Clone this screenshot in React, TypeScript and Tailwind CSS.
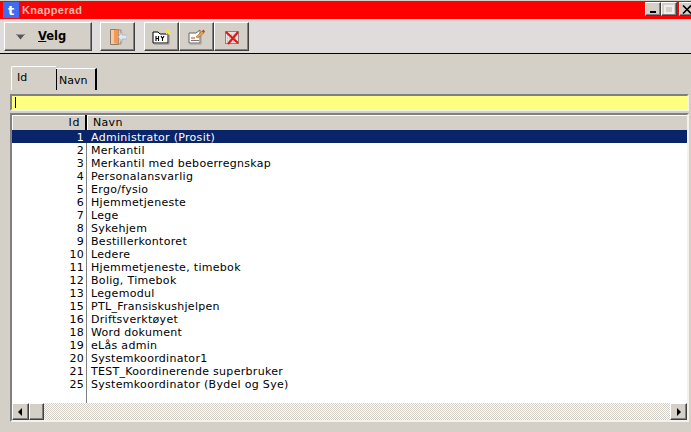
const rows: [number, string][] = [
  [1, 'Administrator (Prosit)'],
  [2, 'Merkantil'],
  [3, 'Merkantil med beboerregnskap'],
  [4, 'Personalansvarlig'],
  [5, 'Ergo/fysio'],
  [6, 'Hjemmetjeneste'],
  [7, 'Lege'],
  [8, 'Sykehjem'],
  [9, 'Bestillerkontoret'],
  [10, 'Ledere'],
  [11, 'Hjemmetjeneste, timebok'],
  [12, 'Bolig, Timebok'],
  [13, 'Legemodul'],
  [15, 'PTL_Fransiskushjelpen'],
  [16, 'Driftsverktøyet'],
  [18, 'Word dokument'],
  [19, 'eLås admin'],
  [20, 'Systemkoordinator1'],
  [21, 'TEST_Koordinerende superbruker'],
  [25, 'Systemkoordinator (Bydel og Sye)'],
]

const raised =
  'border border-t-white border-l-white border-r-[#404040] border-b-[#404040] bg-[#d4d0c8] shadow-[inset_-1px_-1px_0_#808080]'

function WinButton({ children }: { children: React.ReactNode }) {
  return <div className={`${raised} w-[16px] h-[14px] flex items-center justify-center`}>{children}</div>
}

function ToolButton({ children }: { children: React.ReactNode }) {
  return <div className={`${raised} w-[35px] h-[29px] flex items-center justify-center`}>{children}</div>
}

export default function App() {
  return (
    <div className="w-[691px] h-[432px] overflow-hidden bg-[#d4d0c8] flex flex-col font-['DejaVu_Sans',sans-serif] text-[11px] leading-[13px] text-black">
      {/* Title bar */}
      <div className="h-[18px] mt-px bg-[#ff0000] flex items-center shrink-0">
        <div className="w-[16px] h-[16px] ml-[3px] bg-[#3f6cf0] text-white font-bold text-[13px] flex items-center justify-center">t</div>
        <span className="ml-[3px] text-[#f5b8b0] font-bold font-['Liberation_Sans',sans-serif] text-[11px] tracking-[0.3px]">Knapperad</span>
        <div className="ml-auto flex mr-[-4px] -mt-[2px]">
          <WinButton>
            <div className="w-[6px] h-[2px] bg-black mt-[6px]" />
          </WinButton>
          <WinButton>
            <div className="w-[10px] h-[9px] border-2 border-[#f0eeea] bg-[#d4d0c8]" />
          </WinButton>
          <div className="ml-[2px]">
            <WinButton>
              <svg width="10" height="9" viewBox="0 0 10 9">
                <path d="M1 0.5L9 8.5M9 0.5L1 8.5" stroke="#000" strokeWidth="1.6" />
              </svg>
            </WinButton>
          </div>
        </div>
      </div>

      {/* Toolbar */}
      <div className="h-[35px] bg-[#e0dcdc] border-b border-black flex items-start pt-[3px] pl-[4px] shrink-0">
        <div className={`${raised} w-[88px] h-[29px] flex items-center`}>
          <svg width="9" height="6" viewBox="0 0 9 6" className="ml-[11px]">
            <path d="M0 0H9L4.5 5.5Z" fill="#555" />
            <path d="M1 0.5H8" stroke="#999" />
          </svg>
          <span className="ml-[13px] font-bold text-[11.5px]">
            <span className="underline">V</span>elg
          </span>
        </div>
        <div className="ml-[8px]">
          <ToolButton>
            <svg width="18" height="18" viewBox="0 0 18 18">
              <path d="M1.5 1.5H9.5V16.5H1.5Z" fill="#f7c9a0" stroke="#8a7d70" />
              <path d="M5 2L9.5 1.5V16.5L5 15Z" fill="#f09a55" />
              <path d="M10 2H12V5M12 13V16H10" fill="none" stroke="#8a8a8a" />
              <path d="M9 9L13 4.5V7H18V11H13V13.5Z" fill="#dce8f2" stroke="#9aa8b4" strokeWidth="0.6" />
            </svg>
          </ToolButton>
        </div>
        <div className="ml-[9px] flex">
          <ToolButton>
            <svg width="20" height="16" viewBox="0 0 20 16">
              <path d="M1 3H6L8 5H16V14H1Z" fill="#fff" stroke="#000" />
              <path d="M2 15H17V6" fill="none" stroke="#888" />
              <path d="M4 7V12M4 9.5H6.5M6.5 7V12M9 7L10.5 9.5L12 7M10.5 9.5V12" fill="none" stroke="#000" strokeWidth="1.1" />
              <path d="M16 0V6M13 3H19M14 1L18 5M18 1L14 5" stroke="#f2e63c" strokeWidth="1" />
            </svg>
          </ToolButton>
          <ToolButton>
            <svg width="18" height="17" viewBox="0 0 18 17">
              <path d="M1 5L8 5L12 2V15H1Z" fill="#fffdf4" stroke="#666" />
              <path d="M2 16H13V8" fill="none" stroke="#999" />
              <path d="M3 10H7" stroke="#d8352a" />
              <path d="M3 12.5H11" stroke="#777" />
              <path d="M8 9L14 3L16 5L10 10Z" fill="#e8a24a" stroke="#8a5a2a" strokeWidth="0.5" />
              <path d="M14 3L15.5 1.5L17 3.5L16 5Z" fill="#d8352a" />
            </svg>
          </ToolButton>
          <ToolButton>
            <svg width="16" height="16" viewBox="0 0 16 16">
              <path d="M1.5 2.5H14.5V14.5H1.5Z" fill="#e8e4dc" stroke="#333" strokeDasharray="1 1" />
              <path d="M3 6H13M3 9H13M3 12H13" stroke="#aaa" strokeDasharray="1 1" />
              <path d="M2 3L14 14M14 3L4 15" stroke="#e01818" strokeWidth="2.2" />
            </svg>
          </ToolButton>
        </div>
      </div>

      {/* Tabs */}
      <div className="flex items-end pl-[11px] mt-[11px] h-[25px] shrink-0">
        <div className="w-[45px] h-[24px] bg-[#d4d0c8] border-t border-l border-white rounded-tl-[2px] pl-[5px] pt-[4px]">Id</div>
        <div className="w-[41px] h-[22px] bg-[#d4d0c8] border-t border-white border-r-2 border-r-black pl-[3px] pt-[5px] shadow-[inset_1px_0_0_#000]">Navn</div>
      </div>

      {/* Search field */}
      <div className="ml-[10px] mr-[2px] mt-[4px] h-[17px] bg-[#ffff80] border-2 border-t-[#808080] border-l-[#808080] border-b-[#f4f2ec] border-r-[#f4f2ec] shrink-0 flex items-center pl-[3px]">
        <div className="w-px h-[11px] bg-black" />
      </div>

      {/* List */}
      <div className="mx-[10px] mt-[2px] w-[679px] h-[309px] border-2 border-t-[#808080] border-l-[#808080] border-b-[#f4f2ec] border-r-[#f4f2ec] bg-white flex flex-col shrink-0">
        <div className="flex h-[15px] bg-[#d4d0c8] shrink-0 leading-[15px]">
          <div className="w-[75px] text-right pr-[5px] border-r-2 border-black tracking-[0.6px] shadow-[inset_1px_1px_0_#fff]">Id</div>
          <div className="flex-1 pl-[6px] tracking-[0.3px] shadow-[inset_1px_1px_0_#fff]">Navn</div>
        </div>
        <div className="flex-1 relative tracking-[0.3px] leading-[15px]">
          <div className="absolute left-[74px] top-0 bottom-0 w-px bg-[#808080]" />
          {rows.map(([id, name], i) => (
            <div key={id} className={`flex h-[13px] relative ${i === 0 ? 'bg-[#0a246a] text-white' : ''}`}>
              <div className="w-[74px] text-right pr-[2px]">{id}</div>
              <div className="pl-[5px] whitespace-nowrap">{name}</div>
            </div>
          ))}
        </div>
        {/* Horizontal scrollbar */}
        <div className="flex h-[17px] shrink-0 bg-[repeating-conic-gradient(#d4d0c8_0_25%,#ffffff_0_50%)] bg-[length:2px_2px]">
          <div className={`${raised} w-[17px] h-[17px] flex items-center justify-center`}>
            <svg width="5" height="8" viewBox="0 0 5 8"><path d="M4 0V8L0 4Z" fill="#000" /></svg>
          </div>
          <div className={`${raised} w-[15px] h-[17px]`} />
          <div className={`${raised} ml-auto w-[17px] h-[17px] flex items-center justify-center`}>
            <svg width="5" height="8" viewBox="0 0 5 8"><path d="M1 0V8L5 4Z" fill="#000" /></svg>
          </div>
        </div>
      </div>
    </div>
  )
}
